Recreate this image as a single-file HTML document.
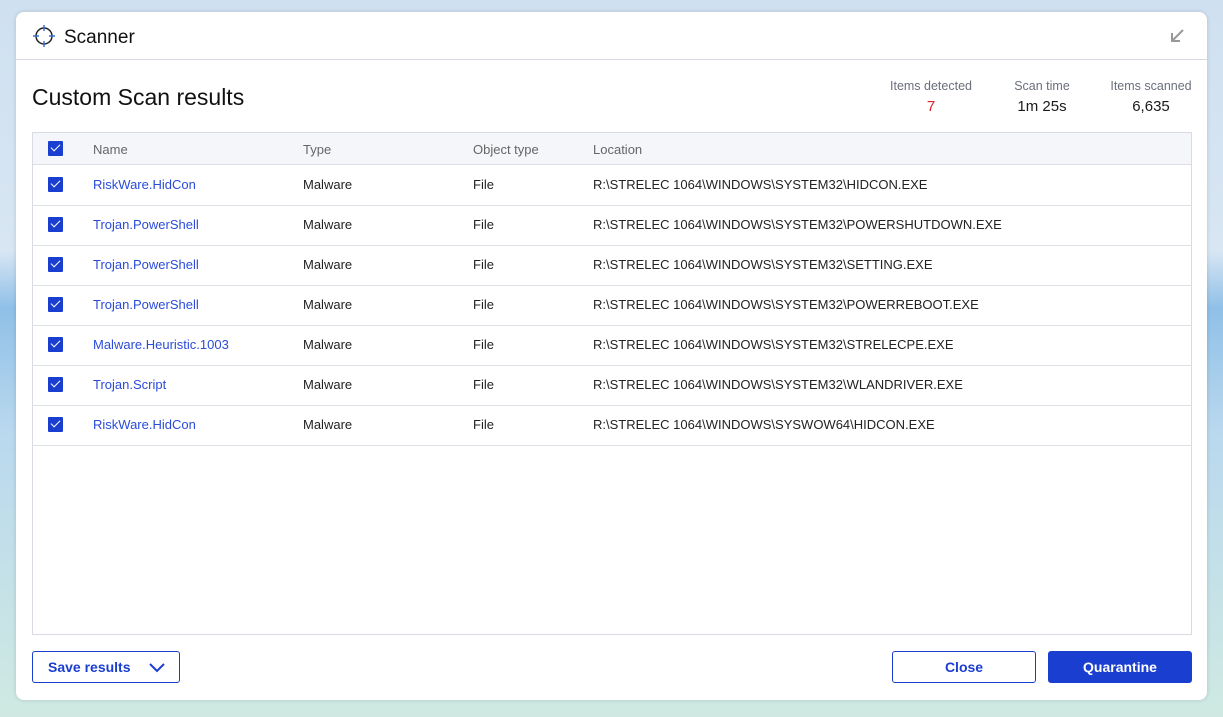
<!DOCTYPE html>
<html><head><style>
body{margin:0;width:1223px;height:717px;overflow:hidden;font-family:"Liberation Sans",sans-serif;
background:linear-gradient(180deg,#cfe0f0 0%,#d8e6f3 35%,#8fc0e8 43%,#b9d8ee 60%,#cfe9e2 100%);position:relative}
.win{position:absolute;left:16px;top:12px;width:1191px;height:688px;background:#fff;border-radius:8px;box-shadow:0 0 4px rgba(0,0,0,.15)}
.a{position:absolute}
.t{position:absolute;left:32px;top:132px;width:1158px;height:501px;border:1px solid #d8dbe3}
.row{position:absolute;left:0;width:1158px;height:40px;border-bottom:1px solid #dcdfe6;font-size:13px;color:#222}
.row span{position:absolute;top:12px}
.cb{position:absolute;left:15px;top:12px;width:15px;height:15px;background:#1a3ecf;border-radius:1px}
.cb::after{content:"";position:absolute;left:3px;top:3px;width:8px;height:4px;border-left:1.5px solid #fff;border-bottom:1.5px solid #fff;transform:rotate(-45deg)}
.n{color:#2b4bd8}
.s{text-align:center;font-size:12.5px;color:#6a6f7c}
.v{text-align:center;font-size:15px;color:#1a1a1a;margin-top:5px}
.btn{position:absolute;top:651px;height:32px;border-radius:3px;font-size:14px;font-weight:bold;box-sizing:border-box;text-align:center;line-height:30px;border:1px solid #1a3ecf}
</style></head><body>
<div class="win"></div>
<svg class="a" style="left:32px;top:24px" width="24" height="24" viewBox="0 0 24 24"><circle cx="12" cy="12" r="8" fill="none" stroke="#222" stroke-width="1.5"/><path d="M12 1v6M12 17v6M1 12h6M17 12h6" stroke="#3c6fd8" stroke-width="1.5"/></svg>
<div class="a" style="left:64px;top:27px;font-size:19px;color:#111">Scanner</div>
<svg class="a" style="left:1169px;top:28px" width="16" height="16"><path d="M14 2L3 13M3 5v8h8" stroke="#999" stroke-width="2" fill="none"/></svg>
<div class="a" style="left:16px;top:59px;width:1191px;height:1px;background:#d8dbe3"></div>
<div class="a" style="left:32px;top:84px;font-size:23px;color:#111">Custom Scan results</div>
<div class="a" style="left:876px;top:79px;width:110px"><div class="s">Items detected</div><div class="v" style="color:#e0202a">7</div></div>
<div class="a" style="left:997px;top:79px;width:90px"><div class="s">Scan time</div><div class="v">1m 25s</div></div>
<div class="a" style="left:1100px;top:79px;width:102px"><div class="s">Items scanned</div><div class="v">6,635</div></div>
<div class="t">
<div class="row" style="top:0;height:31px;background:#f5f6f9;color:#666"><div class="cb" style="top:8px"></div><span style="left:60px;top:9px">Name</span><span style="left:270px;top:9px">Type</span><span style="left:440px;top:9px">Object type</span><span style="left:560px;top:9px">Location</span></div>
<div class="row" style="top:32px"><div class="cb"></div><span class="n" style="left:60px">RiskWare.HidCon</span><span style="left:270px">Malware</span><span style="left:440px">File</span><span style="left:560px">R:\STRELEC 1064\WINDOWS\SYSTEM32\HIDCON.EXE</span></div>
<div class="row" style="top:72px"><div class="cb"></div><span class="n" style="left:60px">Trojan.PowerShell</span><span style="left:270px">Malware</span><span style="left:440px">File</span><span style="left:560px">R:\STRELEC 1064\WINDOWS\SYSTEM32\POWERSHUTDOWN.EXE</span></div>
<div class="row" style="top:112px"><div class="cb"></div><span class="n" style="left:60px">Trojan.PowerShell</span><span style="left:270px">Malware</span><span style="left:440px">File</span><span style="left:560px">R:\STRELEC 1064\WINDOWS\SYSTEM32\SETTING.EXE</span></div>
<div class="row" style="top:152px"><div class="cb"></div><span class="n" style="left:60px">Trojan.PowerShell</span><span style="left:270px">Malware</span><span style="left:440px">File</span><span style="left:560px">R:\STRELEC 1064\WINDOWS\SYSTEM32\POWERREBOOT.EXE</span></div>
<div class="row" style="top:192px"><div class="cb"></div><span class="n" style="left:60px">Malware.Heuristic.1003</span><span style="left:270px">Malware</span><span style="left:440px">File</span><span style="left:560px">R:\STRELEC 1064\WINDOWS\SYSTEM32\STRELECPE.EXE</span></div>
<div class="row" style="top:232px"><div class="cb"></div><span class="n" style="left:60px">Trojan.Script</span><span style="left:270px">Malware</span><span style="left:440px">File</span><span style="left:560px">R:\STRELEC 1064\WINDOWS\SYSTEM32\WLANDRIVER.EXE</span></div>
<div class="row" style="top:272px"><div class="cb"></div><span class="n" style="left:60px">RiskWare.HidCon</span><span style="left:270px">Malware</span><span style="left:440px">File</span><span style="left:560px">R:\STRELEC 1064\WINDOWS\SYSWOW64\HIDCON.EXE</span></div>
</div>
<div class="btn" style="left:32px;width:148px;color:#1a3ecf;text-align:left;padding-left:15px">Save results<svg style="position:absolute;left:116px;top:11px" width="16" height="10"><path d="M1 1l7 7 7-7" stroke="#1a3ecf" stroke-width="2" fill="none"/></svg></div>
<div class="btn" style="left:892px;width:144px;color:#1a3ecf">Close</div>
<div class="btn" style="left:1048px;width:144px;background:#1a3ecf;color:#fff">Quarantine</div>
</body></html>
